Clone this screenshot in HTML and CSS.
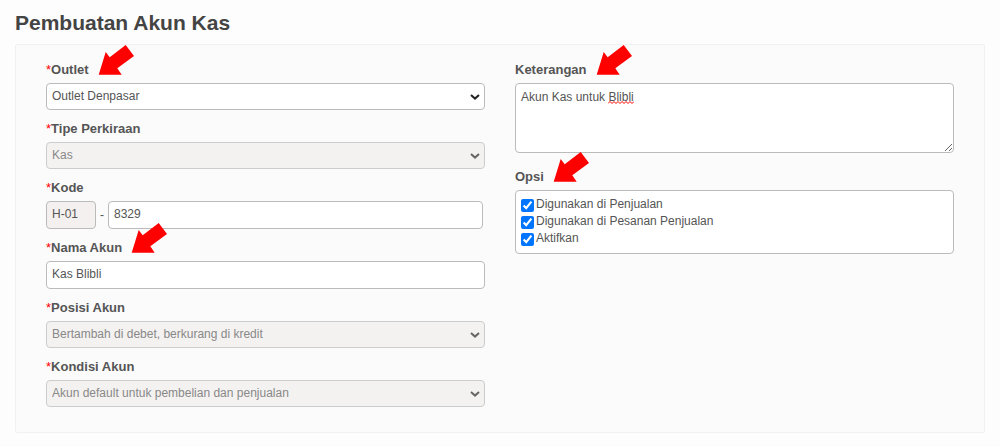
FILE: index.html
```html
<!DOCTYPE html>
<html lang="id">
<head>
    <meta charset="UTF-8">
    <meta name="viewport" content="width=device-width, initial-scale=1.0">
    <title>Pembuatan Akun Kas</title>
    <link rel="stylesheet" href="styles.css">
</head>
<body>

<svg class="defs" width="0" height="0" aria-hidden="true">
    <symbol id="arrow" viewBox="0 0 36 30">
        <path d="M0.7 29.7 7.7 7 11.7 12.3 27.7 0 36 11 19.3 23.3 23.7 29.7z"/>
    </symbol>
</svg>

<h1>Pembuatan Akun Kas</h1>

<form class="panel">
    <div class="column">
        <div class="field">
            <label for="outlet"><span class="required">*</span>Outlet <svg class="arrow" aria-hidden="true"><use href="#arrow"/></svg></label>
            <div class="select-box">
                <select id="outlet" name="outlet">
                    <option>Outlet Denpasar</option>
                </select>
                <svg class="chevron" viewBox="0 0 10 6" aria-hidden="true"><path d="M1 1 5 4.6 9 1"/></svg>
            </div>
        </div>
        <div class="field">
            <label for="tipe"><span class="required">*</span>Tipe Perkiraan</label>
            <div class="select-box">
                <select id="tipe" name="tipe" disabled>
                    <option>Kas</option>
                </select>
                <svg class="chevron" viewBox="0 0 10 6" aria-hidden="true"><path d="M1 1 5 4.6 9 1"/></svg>
            </div>
        </div>
        <div class="field">
            <label for="kode"><span class="required">*</span>Kode</label>
            <div class="code-row">
                <input class="prefix" type="text" name="prefix" value="H-01" aria-label="Awalan kode" readonly>
                <span>-</span>
                <input type="text" id="kode" name="kode" value="8329">
            </div>
        </div>
        <div class="field">
            <label for="nama"><span class="required">*</span>Nama Akun <svg class="arrow" aria-hidden="true"><use href="#arrow"/></svg></label>
            <input type="text" id="nama" name="nama" value="Kas Blibli">
        </div>
        <div class="field">
            <label for="posisi"><span class="required">*</span>Posisi Akun</label>
            <div class="select-box">
                <select id="posisi" name="posisi" disabled>
                    <option>Bertambah di debet, berkurang di kredit</option>
                </select>
                <svg class="chevron" viewBox="0 0 10 6" aria-hidden="true"><path d="M1 1 5 4.6 9 1"/></svg>
            </div>
        </div>
        <div class="field">
            <label for="kondisi"><span class="required">*</span>Kondisi Akun</label>
            <div class="select-box">
                <select id="kondisi" name="kondisi" disabled>
                    <option>Akun default untuk pembelian dan penjualan</option>
                </select>
                <svg class="chevron" viewBox="0 0 10 6" aria-hidden="true"><path d="M1 1 5 4.6 9 1"/></svg>
            </div>
        </div>
    </div>

    <div class="column column-right">
        <div class="field">
            <label for="keterangan">Keterangan <svg class="arrow" aria-hidden="true"><use href="#arrow"/></svg></label>
            <div class="note">
                <textarea id="keterangan" name="keterangan" spellcheck="false">Akun Kas untuk Blibli</textarea>
                <svg class="squiggle" viewBox="0 0 26 3" aria-hidden="true">
                    <path d="M0 2.5 2 .5 4 2.5 6 .5 8 2.5 10 .5 12 2.5 14 .5 16 2.5 18 .5 20 2.5 22 .5 24 2.5 26 .5"/>
                </svg>
            </div>
        </div>
        <div class="field" role="group" aria-labelledby="opsi">
            <span class="label" id="opsi">Opsi <svg class="arrow" aria-hidden="true"><use href="#arrow"/></svg></span>
            <div class="options">
                <label><input type="checkbox" name="penjualan" checked>Digunakan di Penjualan</label>
                <label><input type="checkbox" name="pesanan" checked>Digunakan di Pesanan Penjualan</label>
                <label><input type="checkbox" name="aktif" checked>Aktifkan</label>
            </div>
        </div>
    </div>
</form>

</body>
</html>
```
FILE: styles.css
```css
* {
    box-sizing: border-box;
}

body {
    margin: 0;
    padding: 8px 15px 12px;
    background-color: #fdfdfd;
    color: #555;
    font-family: Arial, "Liberation Sans", sans-serif;
    font-size: 12px;
}

.defs {
    position: absolute;
}

h1 {
    margin: 0 0 6px;
    color: #444;
    font-size: 21px;
    line-height: 30px;
}

.panel {
    display: grid;
    grid-template-columns: 1fr 1fr;
    gap: 30px;
    padding: 16px 30px 25px;
    background-color: #fbfbfb;
    border: 1px solid #f1f1f1;
    border-radius: 2px;
}

.column {
    display: flex;
    flex-direction: column;
    gap: 10px;
}

.column-right {
    gap: 15px;
}

.field {
    display: flex;
    flex-direction: column;
    align-items: flex-start;
    gap: 4px;
}

.field > label,
.field > .label {
    position: relative;
    font-size: 13px;
    font-weight: bold;
    line-height: 18px;
}

.required {
    color: red;
    font-weight: normal;
}

.arrow {
    position: absolute;
    left: 100%;
    bottom: 4px;
    z-index: 1;
    width: 36px;
    height: 30px;
    margin-left: 9px;
    fill: red;
}

input[type="text"],
select,
textarea,
.options {
    width: 100%;
    background-color: #fff;
    border: 1px solid #bbb;
    border-radius: 4px;
    color: #555;
    font-family: inherit;
    font-size: 12px;
}

input[type="text"] {
    height: 28px;
    padding: 0 5px 2px;
}

.select-box {
    position: relative;
    width: 100%;
}

select {
    display: block;
    height: 27px;
    padding: 0 20px 1px 5px;
    appearance: none;
}

select:disabled {
    background-color: #f4f2f1;
    border-color: #ccc;
    color: #888;
    opacity: 1;
}

.chevron {
    position: absolute;
    top: 11px;
    right: 5px;
    width: 10px;
    height: 6px;
    fill: none;
    stroke: #222;
    stroke-width: 2;
    pointer-events: none;
}

select:disabled + .chevron {
    stroke: #666;
}

.code-row {
    display: flex;
    align-items: center;
    gap: 4px;
    width: 100%;
    padding-right: 2px;
}

.code-row .prefix {
    width: 50px;
    flex: none;
    background-color: #f4f0ef;
}

.note {
    position: relative;
    width: 100%;
}

textarea {
    display: block;
    height: 70px;
    padding: 5px;
    line-height: 16px;
    resize: both;
}

/* spelling mark under the last word */
.squiggle {
    position: absolute;
    top: 18px;
    left: 93px;
    width: 26px;
    height: 3px;
    fill: none;
    stroke: red;
}

.options {
    display: flex;
    flex-direction: column;
    padding: 5px 5px 6px;
}

.options label {
    display: flex;
    align-items: center;
    gap: 2px;
    line-height: 17px;
}

.options input {
    width: 13px;
    height: 13px;
    margin: 3px 0 1px;
    accent-color: #0075ff;
}
```
